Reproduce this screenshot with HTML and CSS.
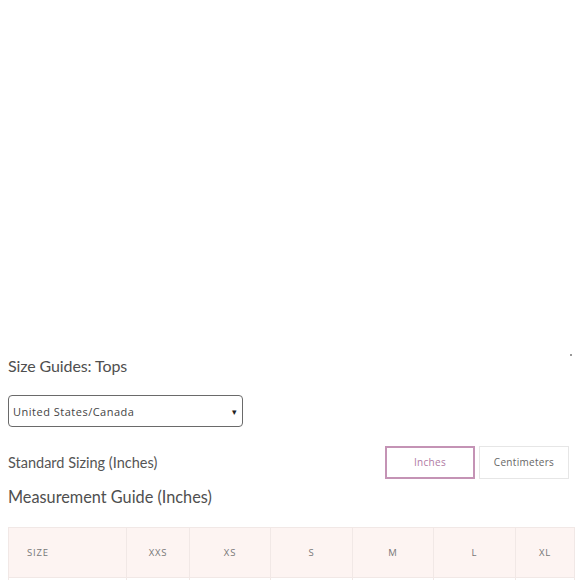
FILE: index.html
```html
<!DOCTYPE html>
<html>
<head>
<meta charset="utf-8">
<link rel="stylesheet" href="styles.css">
</head>
<body>
<div class="page">
  <div class="blank"></div>
  <div class="title-row">
    <h1 class="title">Size Guides: Tops</h1>
    <span class="speck"></span>
  </div>
  <div class="select">
    <span class="select-text">United States/Canada</span>
    <span class="caret">&#9662;</span>
  </div>
  <div class="unit-row">
    <span class="std">Standard Sizing (Inches)</span>
    <div class="toggles">
      <button class="btn active">Inches</button>
      <button class="btn">Centimeters</button>
    </div>
  </div>
  <h2 class="guide">Measurement Guide (Inches)</h2>
  <table class="sizes">
    <colgroup>
      <col style="width:118px"><col style="width:63px"><col style="width:81px"><col style="width:82px"><col style="width:81px"><col style="width:82px"><col style="width:59px">
    </colgroup>
    <tr class="head">
      <th class="first">SIZE</th><th>XXS</th><th>XS</th><th>S</th><th>M</th><th>L</th><th>XL</th>
    </tr>
    <tr class="body">
      <td class="first"></td><td></td><td></td><td></td><td></td><td></td><td></td>
    </tr>
  </table>
</div>
</body>
</html>
```
FILE: styles.css
```css
html, body {
  margin: 0;
  padding: 0;
  background: #ffffff;
}
.page {
  padding: 0 6px 0 8px;
  font-family: "Lato", "Open Sans", sans-serif;
  color: #555;
}
.blank {
  height: 356px;
}
.title-row {
  display: flex;
  justify-content: space-between;
  align-items: flex-start;
  height: 20px;
}
.title {
  margin: 0;
  font-family: "Lato", sans-serif;
  font-weight: 400;
  font-size: 16px;
  line-height: 20px;
  color: #4f4f4f;
  letter-spacing: -0.1px;
}
.speck {
  width: 2px;
  height: 2px;
  background: #999;
  margin-top: -2px;
  margin-right: 2px;
}
.select {
  margin-top: 19px;
  width: 235px;
  height: 32px;
  box-sizing: border-box;
  border: 1px solid #6a6a6a;
  border-radius: 4px;
  display: flex;
  align-items: center;
  justify-content: space-between;
  padding: 0 4px 0 4px;
  font-family: "Open Sans", sans-serif;
  font-size: 11px;
  letter-spacing: 0.5px;
  color: #444;
}
.caret {
  font-size: 9px;
  color: #222;
  margin-right: 1px;
}
.unit-row {
  margin-top: 18px;
  display: flex;
  justify-content: space-between;
  align-items: center;
  height: 34px;
  padding-right: 5px;
}
.std {
  font-size: 14.5px;
  color: #555;
}
.toggles {
  display: flex;
  gap: 4px;
}
.btn {
  height: 33px;
  width: 90px;
  box-sizing: border-box;
  background: #fff;
  border: 1px solid #e6e6e6;
  font-family: "Open Sans", sans-serif;
  font-size: 10px;
  letter-spacing: 0.3px;
  color: #666;
  padding: 0;
}
.btn.active {
  border: 2px solid #c493b5;
  color: #b07aa3;
}
.guide {
  margin: 8px 0 0 0;
  font-family: "Lato", sans-serif;
  font-weight: 400;
  font-size: 16.3px;
  line-height: 20px;
  color: #4f4f4f;
}
.sizes {
  margin-top: 20px;
  border-collapse: collapse;
  table-layout: fixed;
  width: 566px;
}
.sizes th, .sizes td {
  border: 1px solid #f1e8e6;
  font-family: "Open Sans", sans-serif;
  font-weight: 400;
  font-size: 9.5px;
  letter-spacing: 0.8px;
  color: #777;
  text-align: center;
  padding: 0;
}
.sizes .head th {
  background: #fdf4f2;
  height: 49px;
}
.sizes .head th.first {
  text-align: left;
  padding-left: 18px;
}
.sizes .body td {
  height: 40px;
}
```
